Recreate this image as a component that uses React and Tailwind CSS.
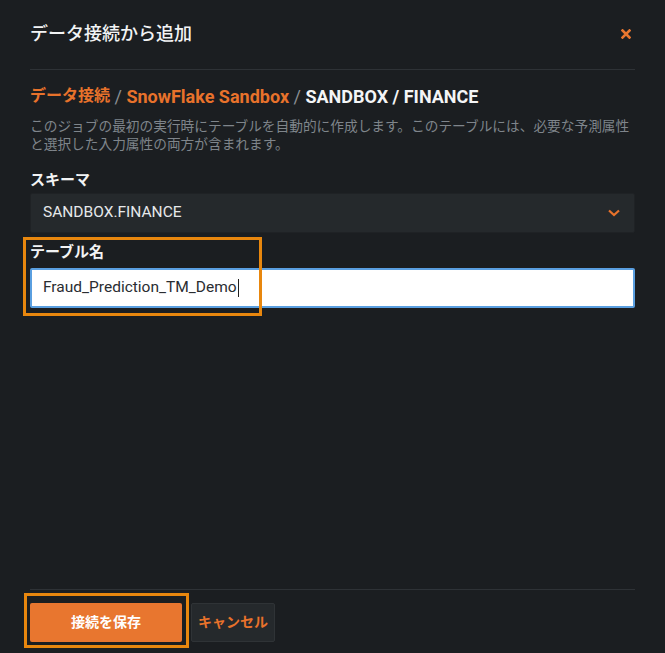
import React from 'react';

const font = { fontFamily: 'Roboto, "Noto Sans CJK JP", sans-serif' };

export default function App() {
  return (
    <div style={font} className="relative w-[665px] h-[653px] bg-[#1b1e21] flex flex-col overflow-hidden">
      {/* Header */}
      <div className="mx-[30px] pt-[22px] pb-[23px] border-b border-[#2e3236] flex items-center justify-between">
        <h1 className="text-[18px] leading-[24px] font-medium text-[#f2f3f4]">データ接続から追加</h1>
        <button type="button" className="mr-[4px] text-[#e8762f]">
          <svg width="10" height="10" viewBox="0 0 10 10" fill="none" stroke="currentColor" strokeWidth="2.6" strokeLinecap="square">
            <path d="M1.5 1.5 L8.5 8.5 M8.5 1.5 L1.5 8.5" />
          </svg>
        </button>
      </div>

      <div className="px-[30px] flex flex-col">
        {/* Breadcrumb */}
        <div className="mt-[14px] h-[24px] flex items-center font-bold whitespace-pre">
          <span className="text-[16px] text-[#e8722b]">データ接続</span>
          <span className="text-[18px] text-[#8a8f94] font-normal"> / </span>
          <span className="text-[18px] text-[#e8722b]">SnowFlake Sandbox</span>
          <span className="text-[18px] text-[#8a8f94] font-normal"> / </span>
          <span className="text-[18px] text-[#f4f5f6]">SANDBOX / FINANCE</span>
        </div>

        <p className="mt-[9px] text-[13.7px] leading-[18px] text-[#7f858b]">
          このジョブの最初の実行時にテーブルを自動的に作成します。このテーブルには、必要な予測属性と選択した入力属性の両方が含まれます。
        </p>

        {/* Schema */}
        <label className="mt-[17px] text-[15px] leading-[20px] font-bold text-[#f2f3f4]">スキーマ</label>
        <div className="mt-[3px] h-[40px] bg-[#25292c] border border-[#1f2225] rounded-[2px] flex items-center justify-between pl-[12px] pr-[14px]">
          <span className="text-[15.5px] text-[#e6e8ea]">SANDBOX.FINANCE</span>
          <svg width="12" height="8" viewBox="0 0 12 8" fill="none" stroke="#e8722b" strokeWidth="2.2">
            <path d="M1 1.5 L6 6 L11 1.5" />
          </svg>
        </div>

        {/* Table name */}
        <label className="mt-[9px] text-[15px] leading-[20px] font-bold text-[#f2f3f4]">テーブル名</label>
        <div className="mt-[6px] h-[40px] bg-white border-2 border-[#5a9fe0] rounded-[2px] flex items-center pl-[11px]">
          <span className="text-[15.5px] text-[#2a2d31]">Fraud_Prediction_TM_Demo</span>
          <span className="w-px h-[18px] bg-[#222] ml-px" />
        </div>
      </div>

      <div className="flex-1" />

      {/* Footer */}
      <div className="mx-[30px] border-t border-[#2e3236] pt-[13px] pb-[11px] flex gap-[9px]">
        <button type="button" className="w-[152px] h-[39px] rounded-[2px] bg-[#e8762f] text-white text-[14px] font-bold">
          接続を保存
        </button>
        <button type="button" className="w-[84px] h-[39px] rounded-[2px] bg-[#25292c] border border-[#2f3336] text-[#e8722b] text-[14px] font-bold">
          キャンセル
        </button>
      </div>

      {/* Highlight overlays */}
      <div className="absolute left-[23px] top-[237px] w-[239px] h-[79px] border-[3px] border-[#e8870e] pointer-events-none" />
      <div className="absolute left-[24px] top-[593px] w-[165px] h-[55px] border-[3px] border-[#e8870e] pointer-events-none" />
    </div>
  );
}
